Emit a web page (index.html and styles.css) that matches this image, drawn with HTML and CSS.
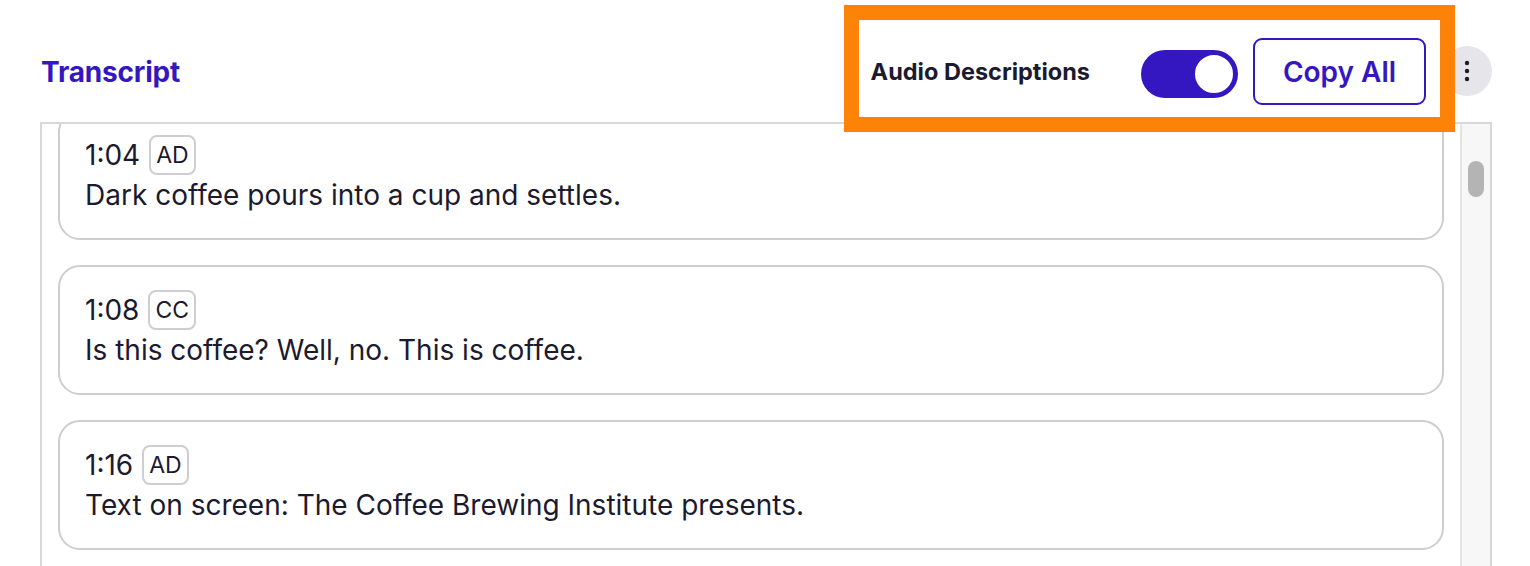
FILE: index.html
```html
<!DOCTYPE html>
<html lang="en">
<head>
<meta charset="utf-8">
<title>Transcript</title>
<link rel="stylesheet" href="styles.css">
</head>
<body>
<div class="page">
  <header class="header">
    <h2 class="title">Transcript</h2>
    <div class="actions">
      <div class="controls">
        <span class="ad-label">Audio Descriptions</span>
        <span class="toggle" role="switch" aria-checked="true"><span class="knob"></span></span>
        <button class="copy-btn">Copy All</button>
      </div>
      <button class="kebab" aria-label="More options">
        <svg width="6" height="24" viewBox="0 0 6 24"><circle cx="3" cy="4" r="2.2" fill="#1c1a2e"/><circle cx="3" cy="12" r="2.2" fill="#1c1a2e"/><circle cx="3" cy="20" r="2.2" fill="#1c1a2e"/></svg>
      </button>
    </div>
  </header>
  <div class="panel">
    <div class="list">
      <div class="cards">
        <article class="card">
          <div class="meta"><span class="time">1:04</span><span class="badge">AD</span></div>
          <p class="line">Dark coffee pours into a cup and settles.</p>
        </article>
        <article class="card">
          <div class="meta"><span class="time">1:08</span><span class="badge">CC</span></div>
          <p class="line">Is this coffee? Well, no. This is coffee.</p>
        </article>
        <article class="card">
          <div class="meta"><span class="time">1:16</span><span class="badge">AD</span></div>
          <p class="line">Text on screen: The Coffee Brewing Institute presents.</p>
        </article>
      </div>
    </div>
    <div class="track"><div class="thumb"></div></div>
  </div>
</div>
</body>
</html>
```
FILE: styles.css
```css
html, body {
  margin: 0;
  padding: 0;
  background: #ffffff;
  overflow: hidden;
}
body {
  font-family: Inter, "Noto Sans", "Liberation Sans", sans-serif;
  color: #1c1a2e;
}
.page {
  padding: 0 38px 0 40px;
}
.header {
  display: flex;
  align-items: center;
  justify-content: space-between;
  padding: 20px 0 5px;
}
.title {
  margin: 6px 0 0 1px;
  font-size: 28px;
  font-weight: 700;
  color: #3517c2;
  letter-spacing: -0.2px;
}
.actions {
  display: flex;
  align-items: center;
}
.controls {
  display: flex;
  align-items: center;
  height: 97px;
  box-sizing: border-box;
  padding: 6px 14px 0 12px;
  outline: 15px solid #fd8208;
  position: relative;
  z-index: 2;
  background: #fff;
}
.ad-label {
  font-size: 23.5px;
  font-weight: 700;
  margin-right: 51px;
  color: #1c1a2e;
}
.toggle {
  width: 97px;
  height: 48px;
  border-radius: 24px;
  background: #3517c2;
  display: flex;
  align-items: center;
  justify-content: flex-end;
  box-sizing: border-box;
  padding-right: 2px;
  margin-right: 15px;
  margin-top: 4px;
}
.knob {
  width: 44px;
  height: 44px;
  border-radius: 50%;
  background: #fff;
  box-sizing: border-box;
  border: 3px solid #3517c2;
}
.copy-btn {
  width: 173px;
  height: 67px;
  border: 2px solid #3517c2;
  border-radius: 9px;
  background: #fff;
  color: #3517c2;
  font-family: inherit;
  font-size: 28px;
  font-weight: 600;
  cursor: pointer;
}
.kebab {
  width: 50px;
  height: 50px;
  border-radius: 50%;
  border: none;
  background: #e6e6ea;
  display: flex;
  align-items: center;
  justify-content: center;
  margin-left: 2px;
  margin-top: 4px;
  padding: 0;
  position: relative;
  z-index: 1;
}
.panel {
  display: flex;
  border: 2px solid #d7d7dc;
  border-bottom: none;
  height: 460px;
  box-sizing: border-box;
}
.list {
  flex: 1;
  overflow: hidden;
  padding: 0 16px;
}
.cards {
  margin-top: -14px;
  display: flex;
  flex-direction: column;
  gap: 25px;
}
.card {
  border: 2px solid #cdcdd2;
  border-radius: 22px;
  padding: 23px 25px 25px;
}
.meta {
  display: flex;
  align-items: center;
  height: 40px;
}
.time {
  font-size: 28px;
  margin-right: 9px;
}
.badge {
  font-size: 23px;
  line-height: 36px;
  border: 2px solid #cdcdd2;
  border-radius: 8px;
  padding: 0 5px;
}
.line {
  margin: 2px 0 0;
  font-size: 28px;
  line-height: 36px;
}
.track {
  width: 28px;
  background: #f7f7f7;
  border-left: 2px solid #e4e4e8;
  position: relative;
}
.thumb {
  position: absolute;
  left: 6px;
  top: 37px;
  width: 16px;
  height: 36px;
  border-radius: 8px;
  background: #b4b4b4;
}
```
